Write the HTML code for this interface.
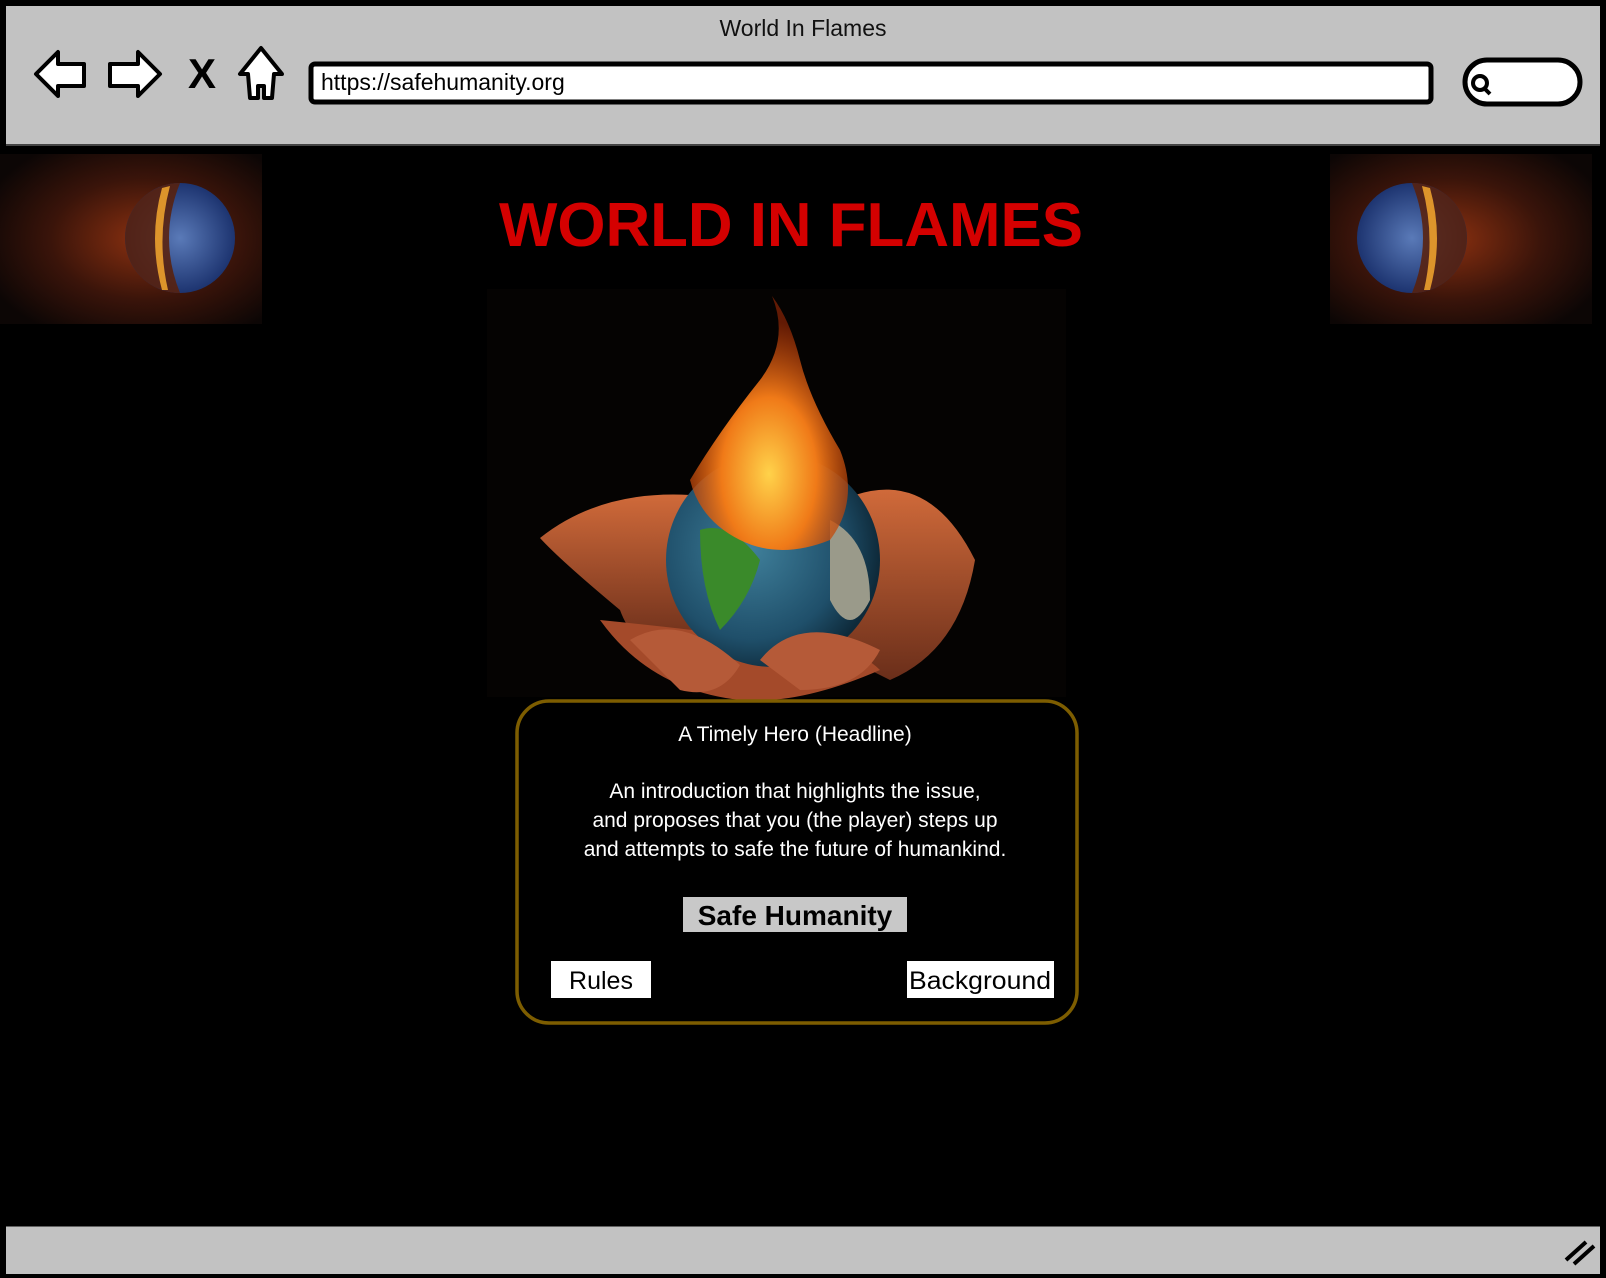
<!DOCTYPE html>
<html><head><meta charset="utf-8"><style>
html,body{margin:0;padding:0;background:#fff;}
svg{display:block;font-family:"Liberation Sans",sans-serif;}
</style></head><body>
<svg width="1606" height="1278" viewBox="0 0 1606 1278" xmlns="http://www.w3.org/2000/svg">
<defs>
<radialGradient id="earthL" cx="0.55" cy="0.5" r="0.65"><stop offset="0" stop-color="#8a3010"/><stop offset="0.55" stop-color="#3a140a"/><stop offset="1" stop-color="#0c0605"/></radialGradient>
<radialGradient id="earthR" cx="0.45" cy="0.5" r="0.65"><stop offset="0" stop-color="#8a3010"/><stop offset="0.55" stop-color="#3a140a"/><stop offset="1" stop-color="#0c0605"/></radialGradient>
<radialGradient id="globe" cx="0.4" cy="0.45" r="0.6"><stop offset="0" stop-color="#3f7f9a"/><stop offset="0.7" stop-color="#1f4f6a"/><stop offset="1" stop-color="#0e2a3a"/></radialGradient>
<radialGradient id="blue" cx="0.5" cy="0.5" r="0.5"><stop offset="0" stop-color="#5a7ab8"/><stop offset="1" stop-color="#1d3470"/></radialGradient>
<radialGradient id="fire" cx="0.5" cy="0.7" r="0.6"><stop offset="0" stop-color="#ffd24a"/><stop offset="0.5" stop-color="#f07a18"/><stop offset="1" stop-color="#a02a05" stop-opacity="0.6"/></radialGradient>
<linearGradient id="hand" x1="0" y1="0" x2="0" y2="1"><stop offset="0" stop-color="#d06a3a"/><stop offset="1" stop-color="#6a2e1a"/></linearGradient>
</defs>
<rect x="0" y="0" width="1606" height="1278" fill="#000"/>
<rect x="6" y="6" width="1594" height="138" fill="#c2c2c2"/>
<text x="803" y="36" font-size="23" text-anchor="middle" fill="#111">World In Flames</text>
<path d="M36 74 L58 52 L58 64 L84 64 L84 86 L58 86 L58 96 Z" fill="#fff" stroke="#000" stroke-width="4" stroke-linejoin="round"/>
<path d="M160 74 L138 52 L138 64 L110 64 L110 86 L138 86 L138 96 Z" fill="#fff" stroke="#000" stroke-width="4" stroke-linejoin="round"/>
<text x="202" y="88" font-size="42" font-weight="bold" text-anchor="middle" fill="#000">X</text>
<path d="M261 48 L240 74 L248 74 L250 98 L258 98 L258 86 L264 86 L264 98 L272 98 L274 74 L282 74 Z" fill="#fff" stroke="#000" stroke-width="4" stroke-linejoin="round"/>
<rect x="311" y="64" width="1120" height="38" rx="4" fill="#fff" stroke="#000" stroke-width="5"/>
<text x="321" y="90" font-size="23" fill="#000">https://safehumanity.org</text>
<rect x="1465" y="60" width="115" height="44" rx="22" fill="#fff" stroke="#000" stroke-width="5"/>
<circle cx="1480" cy="83" r="7" fill="none" stroke="#000" stroke-width="4"/>
<line x1="1484" y1="88" x2="1490" y2="94" stroke="#000" stroke-width="4"/>
<line x1="6" y1="145" x2="1600" y2="145" stroke="#444" stroke-width="2"/>
<rect x="6" y="1226" width="1594" height="48" fill="#c2c2c2"/>
<line x1="6" y1="1225" x2="1600" y2="1225" stroke="#000" stroke-width="3"/>
<path d="M1566 1260 L1586 1242 M1574 1264 L1594 1246" stroke="#000" stroke-width="4"/>
<!-- side earth images -->
<rect x="0" y="154" width="262" height="170" fill="url(#earthL)"/>
<circle cx="180" cy="238" r="55" fill="url(#blue)"/>
<path d="M180 183 A55 55 0 0 0 180 293 Q158 238 180 183 Z" fill="#5a2008" opacity="0.85"/>
<path d="M162 188 Q148 238 162 290 L168 290 Q156 238 170 186 Z" fill="#ffb030" opacity="0.8"/>
<rect x="1330" y="154" width="262" height="170" fill="url(#earthR)"/>
<circle cx="1412" cy="238" r="55" fill="url(#blue)"/>
<path d="M1412 183 A55 55 0 0 1 1412 293 Q1434 238 1412 183 Z" fill="#5a2008" opacity="0.85"/>
<path d="M1430 188 Q1444 238 1430 290 L1424 290 Q1436 238 1422 186 Z" fill="#ffb030" opacity="0.8"/>
<text x="791" y="246" font-size="62" font-weight="bold" text-anchor="middle" fill="#d40000" textLength="584" lengthAdjust="spacingAndGlyphs">WORLD IN FLAMES</text>
<!-- hero image -->
<rect x="487" y="289" width="579" height="408" fill="#050302"/>
<path d="M540 538 Q600 490 690 495 L700 640 Q640 665 620 610 Q560 560 540 538 Z" fill="url(#hand)"/>
<path d="M855 495 Q930 470 975 560 Q960 650 890 680 L830 650 Z" fill="url(#hand)"/>
<path d="M600 620 Q650 690 740 700 Q800 705 880 670 Q850 640 770 640 Q700 630 600 620 Z" fill="#a44a2a"/>
<circle cx="773" cy="560" r="107" fill="url(#globe)"/>
<path d="M700 530 Q730 520 760 560 Q750 600 720 630 Q700 590 700 530 Z" fill="#3a8a2a"/>
<path d="M830 520 Q870 540 870 600 Q850 640 830 600 Z" fill="#9a9a8a"/>
<path d="M772 296 Q790 340 760 380 Q720 430 690 480 Q700 520 740 540 Q780 560 830 540 Q860 500 840 450 Q810 400 800 360 Q790 320 772 296 Z" fill="url(#fire)"/>
<path d="M630 640 Q680 610 740 665 Q720 700 680 690 Z M760 660 Q800 610 880 650 Q860 690 800 690 Z" fill="#b55a38"/>
<rect x="517" y="701" width="560" height="322" rx="32" fill="#000" stroke="#7d5d00" stroke-width="3.5"/>
<g fill="#fff" font-size="21" text-anchor="middle">
<text x="795" y="741">A Timely Hero (Headline)</text>
<text x="795" y="798">An introduction that highlights the issue,</text>
<text x="795" y="827">and proposes that you (the player) steps up</text>
<text x="795" y="856">and attempts to safe the future of humankind.</text>
</g>
<rect x="683" y="897" width="224" height="35" fill="#c8c8c8"/>
<text x="795" y="925" font-size="28" font-weight="bold" text-anchor="middle" fill="#000">Safe Humanity</text>
<rect x="551" y="961" width="100" height="37" fill="#fff"/>
<text x="601" y="989" font-size="25" text-anchor="middle" fill="#000">Rules</text>
<rect x="907" y="961" width="147" height="37" fill="#fff"/>
<text x="980" y="989" font-size="25" text-anchor="middle" fill="#000" textLength="142" lengthAdjust="spacingAndGlyphs">Background</text>
</svg>
</body></html>
